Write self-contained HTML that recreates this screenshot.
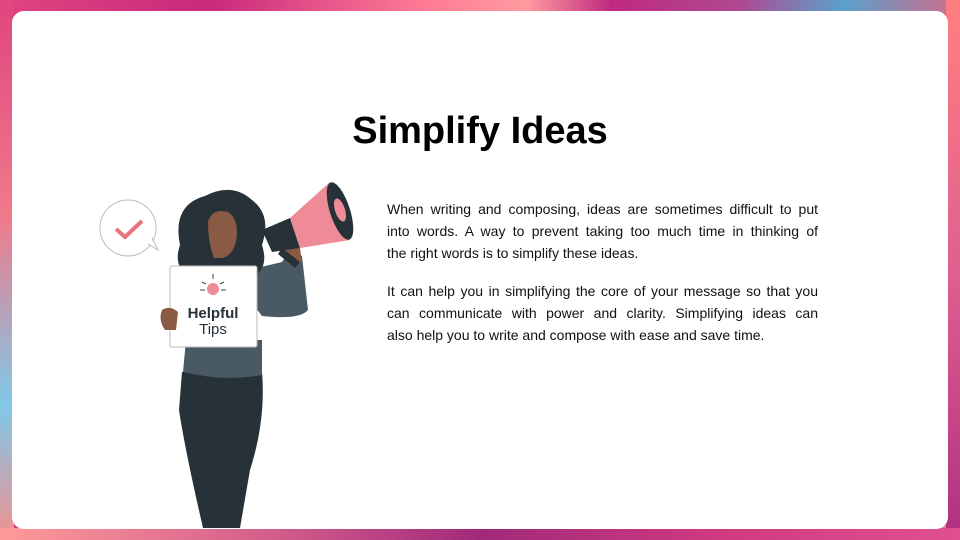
<!DOCTYPE html>
<html><head><style>
html,body{margin:0;padding:0}
body{width:960px;height:540px;position:relative;overflow:hidden;font-family:"Liberation Sans",sans-serif;
background:linear-gradient(100deg,#e0457f 0%,#c92a7c 20%,#ff7a95 40%,#ff9aa0 50%,#bf2a80 58%,#b04890 70%,#5aa0cc 80%,#c87090 90%,#ff7f80 100%);}
.side{position:absolute;top:0;bottom:0;width:14px}
.l{left:0;background:linear-gradient(180deg,#e0457f,#f07a8a 40%,#80c8e8 75%,#f09090)}
.r{right:0;background:linear-gradient(180deg,#ff7f80,#e06090 50%,#b03080)}
.bot{position:absolute;left:0;right:0;bottom:0;height:12px;background:linear-gradient(90deg,#ff9a9a,#d05a8a 30%,#a02a7a 50%,#d03a80 75%,#e05090)}
.card{position:absolute;left:12px;top:11px;width:936px;height:518px;background:#fff;border-radius:12px}
h1{position:absolute;left:0;width:960px;top:110px;margin:0;text-align:center;font-size:38px;font-weight:bold;color:#000}
.t{position:absolute;left:387px;width:431px;font-size:14px;line-height:22px;color:#111}
.t div{text-align:justify;text-align-last:justify;white-space:nowrap}
.t div.e{text-align-last:left}
</style></head><body>
<div class="side l"></div><div class="side r"></div><div class="bot"></div>
<div class="card"></div>
<h1>Simplify Ideas</h1>
<div class="t" style="top:198px"><div>When writing and composing, ideas are sometimes difficult to put</div><div>into words. A way to prevent taking too much time in thinking of</div><div class="e">the right words is to simplify these ideas.</div></div>
<div class="t" style="top:280px"><div>It can help you in simplifying the core of your message so that you</div><div>can communicate with power and clarity. Simplifying ideas can</div><div class="e">also help you to write and compose with ease and save time.</div></div>
<svg style="position:absolute;left:0;top:0" width="960" height="540">
<circle cx="128" cy="228" r="28" fill="#fff" stroke="#bbb" stroke-width="1"/>
<path d="M148 244 L158 250 L152 238" fill="#fff" stroke="#bbb"/>
<path d="M116 229 L125 237 L142 221" fill="none" stroke="#e8737f" stroke-width="4"/>
<path d="M182 372 L262 372 Q266 420 250 470 L240 528 L203 528 Q185 450 179 410 Z" fill="#263238"/>
<path d="M186 340 L262 340 L262 375 Q225 382 183 372 Z" fill="#4a5a65"/>
<path d="M248 270 L282 262 L290 250 L302 256 L308 310 Q300 320 262 316 L250 300 Z" fill="#4a5a65"/>
<path d="M180 245 Q172 205 205 196 Q232 182 252 200 Q272 215 262 245 Q270 270 250 278 L192 278 Q172 268 180 245 Z" fill="#263238"/>
<path d="M208 222 Q212 208 228 212 Q240 220 236 242 Q232 256 222 258 L214 258 Q208 243 208 222 Z" fill="#8b5a45"/>
<path d="M280 250 Q288 240 300 248 L302 262 L288 264 Z" fill="#8b5a45"/>
<path d="M262 230 L290 218 L300 248 L272 252 Z" fill="#263238"/>
<path d="M290 218 L330 182 L350 240 L300 248 Z" fill="#ee8b96"/>
<ellipse cx="340" cy="211" rx="10" ry="30" transform="rotate(-18 340 211)" fill="#263238"/>
<ellipse cx="340" cy="210" rx="5" ry="12" transform="rotate(-18 340 210)" fill="#ee8b96"/>
<path d="M282 248 L300 262 L295 268 L278 254 Z" fill="#263238"/>
<rect x="170" y="266" width="87" height="81" rx="2" fill="#fff" stroke="#bbb"/>
<circle cx="213" cy="289" r="6" fill="#ee8b96"/>
<path d="M213 274v5M202 282l4 2M224 282l-4 2M200 290h5M221 290h5" stroke="#444" stroke-width="1"/>
<text x="213" y="318" text-anchor="middle" font-family="Liberation Sans" font-weight="bold" font-size="15" fill="#263238">Helpful</text>
<text x="213" y="334" text-anchor="middle" font-family="Liberation Sans" font-size="15" fill="#263238">Tips</text>
<path d="M162 310 Q170 305 178 312 L176 330 L165 330 Q158 320 162 310 Z" fill="#8b5a45"/>
</svg>
</body></html>
